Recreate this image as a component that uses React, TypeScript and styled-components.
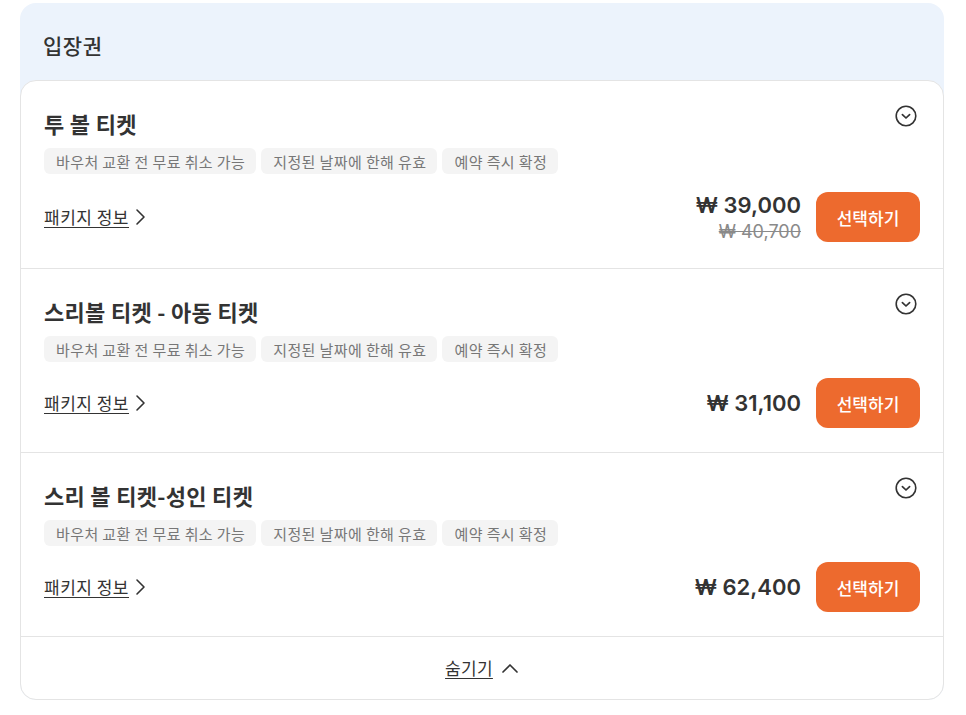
import React from "react";
import styled, { createGlobalStyle } from "styled-components";

const GlobalStyle = createGlobalStyle`
  * { box-sizing: border-box; }
  html, body { margin: 0; padding: 0; background: #ffffff; }
  body {
    font-family: "Noto Sans CJK KR", "Noto Sans", "Liberation Sans", sans-serif;
    color: #333333;
    -webkit-font-smoothing: antialiased;
  }
`;

const Page = styled.div`
  padding: 3px 22px 0 20px;
  width: 966px;
`;

const Panel = styled.section`
  background: #ecf3fc;
  border-radius: 16px;
`;

const PanelTitle = styled.h2`
  margin: 0;
  padding: 28px 23px 21px;
  font-size: 21px;
  line-height: 28px;
  font-weight: 500;
  letter-spacing: 0.5px;
  color: #333333;
`;

const Card = styled.div`
  background: #ffffff;
  border: 1px solid #e4e4e4;
  border-radius: 16px;
  overflow: hidden;
`;

const Row = styled.div`
  padding: 28px 23px 24px;
  border-bottom: 1px solid #e4e4e4;
  display: flex;
  flex-direction: column;
`;

const RowHead = styled.div`
  display: flex;
  justify-content: space-between;
  align-items: flex-start;
`;

const RowTitle = styled.h3`
  margin: 0;
  font-size: 22px;
  line-height: 28px;
  font-weight: 700;
  letter-spacing: 0.3px;
  color: #333333;
`;

const ToggleButton = styled.button`
  margin: -4px 3px 0 0;
  padding: 0;
  border: 0;
  background: transparent;
  width: 22px;
  height: 22px;
  display: flex;
  align-items: center;
  justify-content: center;
  color: #333333;
  cursor: pointer;
`;

const Tags = styled.div`
  display: flex;
  gap: 5px;
  margin-top: 11px;
`;

const Tag = styled.span`
  display: inline-flex;
  align-items: center;
  height: 26px;
  padding: 0 11px 0 12px;
  border-radius: 6px;
  background: #f4f4f4;
  color: #777777;
  font-size: 15px;
  letter-spacing: 0.4px;
  line-height: 1;
`;

const RowBottom = styled.div`
  display: flex;
  align-items: center;
  justify-content: space-between;
  margin-top: 16px;
`;

const InfoLink = styled.a`
  display: inline-flex;
  align-items: center;
  gap: 5px;
  color: #333333;
  font-size: 17px;
  letter-spacing: 0.5px;
  line-height: 22px;
  cursor: pointer;
`;

const Underlined = styled.span`
  text-decoration: underline;
  text-underline-offset: 3px;
`;

const Buy = styled.div`
  display: flex;
  align-items: center;
  gap: 15px;
`;

const PriceBlock = styled.div`
  display: flex;
  flex-direction: column;
  align-items: flex-end;
  font-family: Inter, "Noto Sans", sans-serif;
`;

const Price = styled.span`
  font-size: 22px;
  line-height: 30px;
  font-weight: 600;
  color: #333333;
`;

const OldPrice = styled.span`
  font-size: 18px;
  line-height: 24px;
  color: #8a8a8a;
  text-decoration: line-through;
`;

const SelectButton = styled.button`
  width: 104px;
  height: 50px;
  border: 0;
  border-radius: 12px;
  background: #ed6a2e;
  color: #ffffff;
  font-family: inherit;
  font-size: 17px;
  font-weight: 500;
  cursor: pointer;
`;

const Footer = styled.div`
  height: 62px;
  display: flex;
  align-items: center;
  justify-content: center;
`;

const HideButton = styled.button`
  display: inline-flex;
  align-items: center;
  gap: 8px;
  border: 0;
  background: transparent;
  padding: 0;
  font-family: inherit;
  font-size: 17px;
  letter-spacing: 0.3px;
  line-height: 22px;
  color: #333333;
  cursor: pointer;
`;

const CircleChevron = () => (
  <svg width="22" height="22" viewBox="0 0 22 22" fill="none">
    <circle cx="11" cy="11" r="9.8" stroke="#333" strokeWidth="1.6" />
    <path d="M7.4 9.6 L11 13 L14.6 9.6" stroke="#333" strokeWidth="1.7" strokeLinecap="round" strokeLinejoin="round" />
  </svg>
);

const ChevronRight = () => (
  <svg width="12" height="18" viewBox="0 0 12 18" fill="none">
    <path d="M3 2 L10 9 L3 16" stroke="#333" strokeWidth="1.6" strokeLinecap="round" strokeLinejoin="round" />
  </svg>
);

const ChevronUp = () => (
  <svg width="18" height="12" viewBox="0 0 18 12" fill="none">
    <path d="M2 10 L9 3 L16 10" stroke="#333" strokeWidth="1.7" strokeLinecap="round" strokeLinejoin="round" />
  </svg>
);

type Ticket = { name: string; price: string; oldPrice?: string };

const tickets: Ticket[] = [
  { name: "투 볼 티켓", price: "₩ 39,000", oldPrice: "₩ 40,700" },
  { name: "스리볼 티켓 - 아동 티켓", price: "₩ 31,100" },
  { name: "스리 볼 티켓-성인 티켓", price: "₩ 62,400" },
];

const tagList = ["바우처 교환 전 무료 취소 가능", "지정된 날짜에 한해 유효", "예약 즉시 확정"];

export default function App() {
  return (
    <>
      <GlobalStyle />
      <Page>
        <Panel>
          <PanelTitle>입장권</PanelTitle>
          <Card>
            {tickets.map((t) => (
              <Row key={t.name}>
                <RowHead>
                  <RowTitle>{t.name}</RowTitle>
                  <ToggleButton aria-label="펼치기">
                    <CircleChevron />
                  </ToggleButton>
                </RowHead>
                <Tags>
                  {tagList.map((tag) => (
                    <Tag key={tag}>{tag}</Tag>
                  ))}
                </Tags>
                <RowBottom>
                  <InfoLink>
                    <Underlined>패키지 정보</Underlined>
                    <ChevronRight />
                  </InfoLink>
                  <Buy>
                    <PriceBlock>
                      <Price>{t.price}</Price>
                      {t.oldPrice && <OldPrice>{t.oldPrice}</OldPrice>}
                    </PriceBlock>
                    <SelectButton>선택하기</SelectButton>
                  </Buy>
                </RowBottom>
              </Row>
            ))}
            <Footer>
              <HideButton>
                <Underlined>숨기기</Underlined>
                <ChevronUp />
              </HideButton>
            </Footer>
          </Card>
        </Panel>
      </Page>
    </>
  );
}
